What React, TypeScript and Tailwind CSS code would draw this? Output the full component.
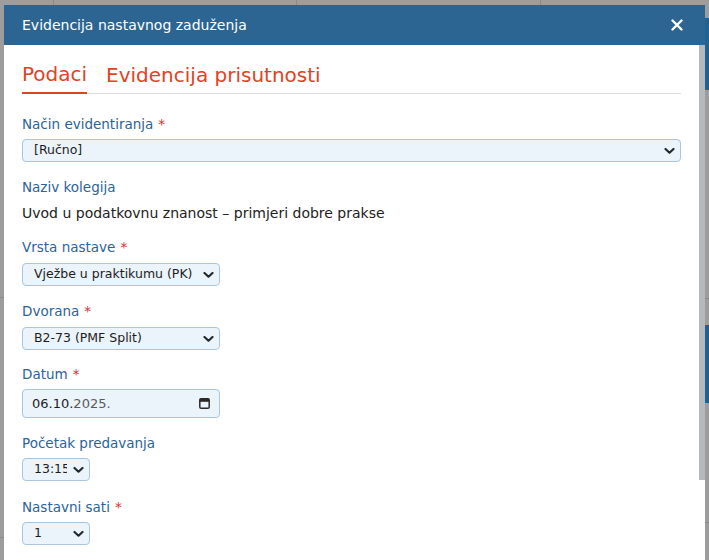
import { useState } from "react";

const font = { fontFamily: '"DejaVu Sans", Verdana, sans-serif' };

function Chevron() {
  return (
    <svg width="11" height="7" viewBox="0 0 11 7" className="pointer-events-none absolute right-[6px] top-1/2 -translate-y-1/2">
      <path d="M1.5 1.5 L5.5 5.2 L9.5 1.5" fill="none" stroke="#1f2a33" strokeWidth="2.2" strokeLinecap="round" strokeLinejoin="round" />
    </svg>
  );
}

function Label({ text, required }: { text: string; required?: boolean }) {
  return (
    <div className="h-[20px] text-[13.5px] leading-[20px] text-[#2b649a]">
      {text}
      {required && <span className="ml-[5px] text-[#d9343a]">*</span>}
    </div>
  );
}

function Select({ value, options, width }: { value: string; options: string[]; width: string }) {
  const [val, setVal] = useState(value);
  return (
    <div className={`relative ${width}`}>
      <select
        value={val}
        onChange={(e) => setVal(e.target.value)}
        style={font}
        className="block h-[23px] w-full appearance-none rounded-[4px] border border-[#a9c6e0] bg-[#ebf3fb] pl-[11px] pr-[22px] text-[12.5px] text-[#1d1d1d] outline-none"
      >
        {options.map((o) => (
          <option key={o}>{o}</option>
        ))}
      </select>
      <Chevron />
    </div>
  );
}

export default function App() {
  const [tab, setTab] = useState("podaci");

  return (
    <div style={font} className="relative h-[560px] w-[709px] overflow-hidden bg-[#9d9d9d]">
      {/* page behind the overlay */}
      <div className="absolute left-[53px] top-0 h-[5px] w-px bg-[#8a8a8a]" />
      <div className="absolute left-[296px] top-0 h-[5px] w-px bg-[#8a8a8a]" />
      <div className="absolute left-[540px] top-0 h-[5px] w-px bg-[#8a8a8a]" />
      <div className="absolute left-0 top-[297px] h-px w-[4px] bg-[#8a8a8a]" />
      <div className="absolute left-0 top-[537px] h-px w-[4px] bg-[#8a8a8a]" />
      <div className="absolute right-0 top-[18px] h-[72px] w-[4px] bg-[#1f6392]" />
      <div className="absolute right-0 top-[325px] h-[78px] w-[4px] bg-[#1f6392]" />
      <div className="absolute right-0 top-[298px] h-px w-[4px] bg-[#8a8a8a]" />
      <div className="absolute right-0 top-[522px] h-px w-[4px] bg-[#8a8a8a]" />

      <div className="ml-[4px] mt-[5px] w-[701px]">
        <div className="flex h-[40px] items-center justify-between bg-[#2c6591] pl-[18px] pr-[22px]">
          <span className="text-[14px] text-white">Evidencija nastavnog zaduženja</span>
          <svg width="12" height="12" viewBox="0 0 12 12">
            <path d="M1.5 1.5 L10.5 10.5 M10.5 1.5 L1.5 10.5" stroke="#fff" strokeWidth="2.4" strokeLinecap="round" />
          </svg>
        </div>

        <div className="flex bg-white">
          <div className="h-[520px] flex-1 px-[18px] pt-[15px]">
            <div className="flex h-[34px] gap-[19px] border-b border-[#dcdcdc]">
              <button
                onClick={() => setTab("podaci")}
                className={`-mb-px h-[34px] pb-[5px] text-[20px] leading-[28px] text-[#e2421f] ${tab === "podaci" ? "border-b-2 border-[#e2421f]" : ""}`}
              >
                Podaci
              </button>
              <button
                onClick={() => setTab("evidencija")}
                className={`-mb-px h-[34px] pb-[5px] text-[20px] leading-[28px] text-[#e2421f] ${tab === "evidencija" ? "border-b-2 border-[#e2421f]" : ""}`}
              >
                Evidencija prisutnosti
              </button>
            </div>

            <div className="mt-[20px] flex flex-col">
              <Label text="Način evidentiranja" required />
              <div className="mb-[15px] mt-[5px]">
                <Select value="[Ručno]" options={["[Ručno]", "[Automatski]"]} width="w-full" />
              </div>

              <Label text="Naziv kolegija" />
              <div className="mb-[14px] mt-[6px] h-[20px] text-[14px] leading-[20px] text-[#222]">
                Uvod u podatkovnu znanost – primjeri dobre prakse
              </div>

              <Label text="Vrsta nastave" required />
              <div className="mb-[15px] mt-[6px]">
                <Select value="Vježbe u praktikumu (PK)" options={["Predavanja (P)", "Vježbe u praktikumu (PK)", "Seminar (S)"]} width="w-[198px]" />
              </div>

              <Label text="Dvorana" required />
              <div className="mb-[14px] mt-[6px]">
                <Select value="B2-73 (PMF Split)" options={["B2-73 (PMF Split)", "A1-01 (PMF Split)"]} width="w-[198px]" />
              </div>

              <Label text="Datum" required />
              <div className="mb-[15px] mt-[5px] flex h-[29px] w-[198px] items-center justify-between rounded-[4px] border border-[#a9c6e0] bg-[#ebf3fb] pl-[9px] pr-[9px] text-[13px] text-[#1d1d1d]">
                <span>
                  06.10.<span className="text-[#5a5a5a]">2025.</span>
                </span>
                <svg width="11" height="11" viewBox="0 0 11 11">
                  <rect x="0.8" y="0.8" width="9.4" height="9.4" rx="1.3" fill="none" stroke="#2a2a2a" strokeWidth="1.5" />
                  <rect x="0.8" y="0.8" width="9.4" height="3" fill="#2a2a2a" />
                </svg>
              </div>

              <Label text="Početak predavanja" />
              <div className="mb-[16px] mt-[5px]">
                <Select value="13:15" options={["13:15", "14:00"]} width="w-[68px]" />
              </div>

              <Label text="Nastavni sati" required />
              <div className="mt-[5px]">
                <Select value="1" options={["1", "2", "3", "4"]} width="w-[68px]" />
              </div>
            </div>
          </div>
          <div className="w-[6px]">
            <div className="h-[435px] w-[6px] bg-[#b6b9bc]" />
          </div>
        </div>
      </div>
    </div>
  );
}
